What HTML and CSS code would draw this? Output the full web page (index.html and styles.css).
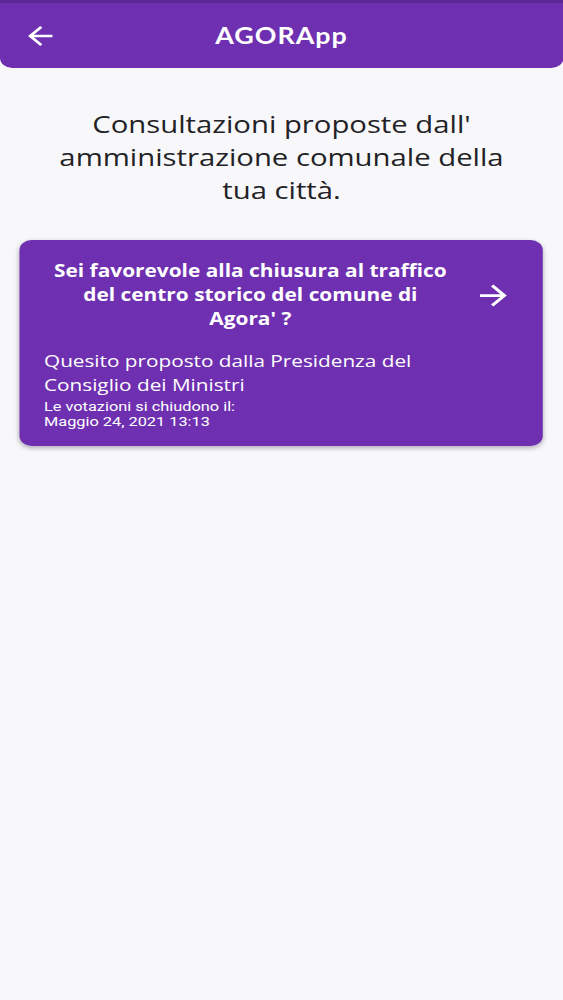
FILE: index.html
```html
<!DOCTYPE html>
<html lang="it">
<head>
<meta charset="utf-8">
<title>AGORApp</title>
<link rel="stylesheet" href="styles.css">
</head>
<body>
<div class="screen">
  <header class="appbar">
    <button class="back" aria-label="Indietro">
      <svg class="back-icon" viewBox="0 0 24 24"><path d="M20 11H7.83l5.59-5.59L12 4l-8 8 8 8 1.41-1.41L7.83 13H20v-2z" fill="#fff"/></svg>
    </button>
    <h1 class="title">AGORApp</h1>
    <span class="spacer"></span>
  </header>
  <main class="content">
    <p class="intro">Consultazioni proposte dall' amministrazione comunale della tua città.</p>
    <article class="card">
      <div class="card-top">
        <h2 class="question">Sei favorevole alla chiusura al traffico del centro storico del comune di Agora' ?</h2>
        <svg class="go" viewBox="0 0 24 24"><path d="M12 4l-1.41 1.41L16.17 11H4v2h12.17l-5.58 5.59L12 20l8-8z" fill="#fff"/></svg>
      </div>
      <p class="author">Quesito proposto dalla Presidenza del Consiglio dei Ministri</p>
      <p class="deadline">Le votazioni si chiudono il:<br>Maggio 24, 2021 13:13</p>
    </article>
  </main>
</div>
</body>
</html>
```

FILE: styles.css
```css
html, body {
  margin: 0;
  padding: 0;
  background: #f8f8fa;
  overflow: hidden;
}
body {
  font-family: "Open Sans", "Noto Sans", sans-serif;
}
/* the reference capture is horizontally stretched; reproduce it */
.screen {
  width: 461.6px;
  min-height: 1000px;
  transform: scaleX(1.2197);
  transform-origin: 0 0;
}
.appbar {
  box-sizing: border-box;
  height: 68px;
  background: #6e30b0;
  border-top: 3px solid #5c2899;
  border-radius: 0 0 10px 10px;
  display: grid;
  grid-template-columns: 60px 1fr 60px;
  align-items: center;
}
.back {
  background: none;
  border: 0;
  padding: 0 0 0 18px;
  margin: 0;
  height: 30px;
  display: flex;
  align-items: center;
  cursor: pointer;
}
.back-icon {
  width: 30px;
  height: 30px;
  display: block;
}
.title {
  margin: 0;
  text-align: center;
  color: #fff;
  font-family: Lato, "Open Sans", sans-serif;
  font-weight: 700;
  font-size: 22px;
  letter-spacing: 0.8px;
  line-height: 30px;
}
.content {
  padding: 0 16.4px;
}
.intro {
  width: 380px;
  margin: 38.5px auto 0;
  text-align: center;
  font-size: 24px;
  line-height: 33px;
  color: #222226;
}
.card {
  margin-top: 34.5px;
  background: #6e30b0;
  border-radius: 10px;
  box-shadow: 0 2px 5px rgba(40, 20, 60, 0.35);
  padding: 19px 24.2px 17.5px 19.7px;
  color: #fff;
}
.card-top {
  display: flex;
  align-items: center;
}
.question {
  width: 328px;
  flex: none;
  margin: 0 0 0 5.2px;
  font-size: 17.1px;
  line-height: 24px;
  font-weight: 700;
  text-align: center;
}
.go {
  width: 33px;
  height: 33px;
  margin-left: auto;
  flex: none;
}
.author {
  max-width: 350px;
  margin: 18px 0 0;
  font-size: 17px;
  line-height: 24px;
  font-weight: 400;
}
.deadline {
  margin: 1.5px 0 0;
  font-family: Roboto, "Liberation Sans", sans-serif;
  font-size: 13.4px;
  line-height: 15px;
}
```
